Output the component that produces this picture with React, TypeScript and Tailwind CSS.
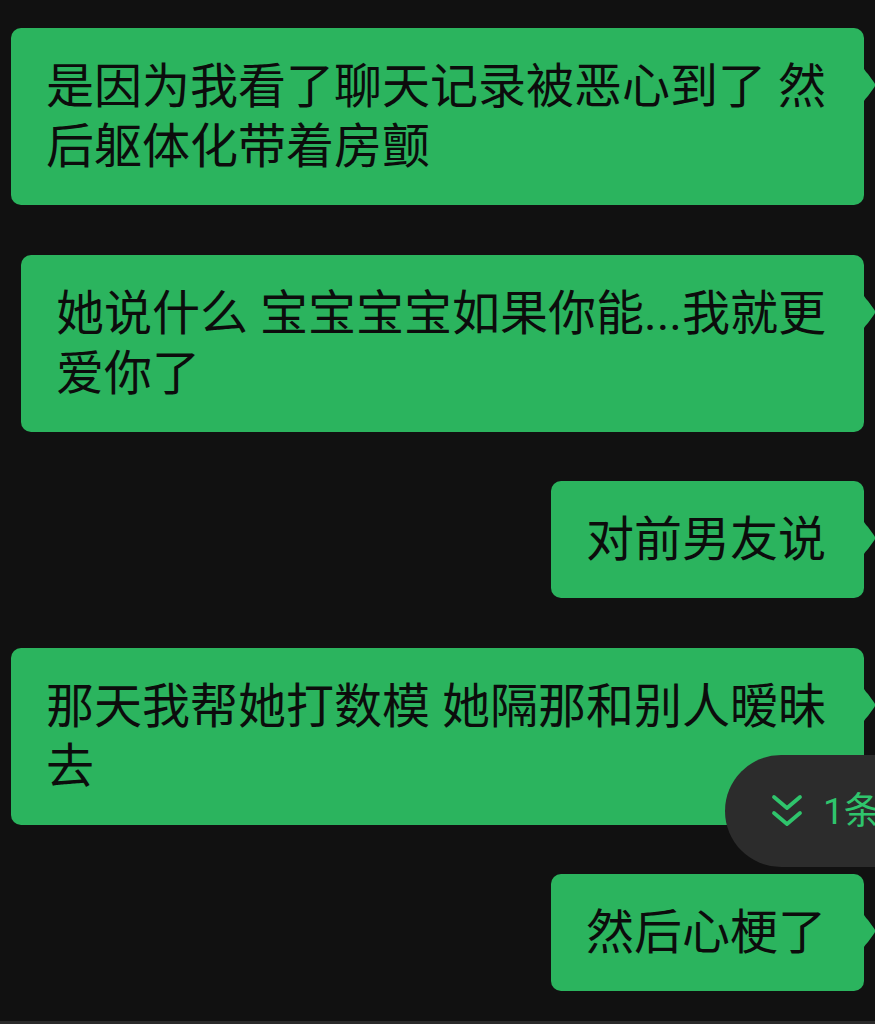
const messages: string[][] = [
  ["是因为我看了聊天记录被恶心到了 然", "后躯体化带着房颤"],
  ["她说什么 宝宝宝宝如果你能...我就更", "爱你了"],
  ["对前男友说"],
  ["那天我帮她打数模 她隔那和别人暧昧", "去"],
  ["然后心梗了"],
];

function Tail() {
  return (
    <svg
      className="absolute left-full top-[41px]"
      width="12"
      height="32"
      viewBox="0 0 12 32"
    >
      <path d="M0 0 Q1.5 2.5 4 5 L10.5 14 Q11.6 16 10.5 18 L4 27 Q1.5 29.5 0 32 Z" fill="#2bb45e" />
    </svg>
  );
}

function Bubble({ lines }: { lines: string[] }) {
  return (
    <div className="relative rounded-[10px] bg-[#2bb45e] pl-[35px] pr-[38px] pt-[29px] pb-[28px] text-[48px] leading-[60px] text-[#0c0c0c] whitespace-nowrap">
      {lines.map((line, i) => (
        <div key={i}>{line}</div>
      ))}
      <Tail />
    </div>
  );
}

export default function App() {
  return (
    <div
      className="relative flex h-[1024px] w-full flex-col overflow-hidden bg-[#111111]"
      style={{ fontFamily: "Roboto, 'Noto Sans CJK SC', sans-serif" }}
    >
      {/* Chat list */}
      <div className="flex flex-1 flex-col items-end gap-[49.5px] pt-[28px] pr-[11px]">
        {messages.map((lines, i) => (
          <Bubble key={i} lines={lines} />
        ))}
      </div>

      {/* Bottom bar edge */}
      <div className="h-[3px] bg-[#2a2a2a]" />

      {/* New messages pill */}
      <div className="absolute left-[725px] top-[755px] flex h-[112px] w-[220px] items-center gap-[20px] rounded-l-[56px] bg-[#2c2c2c] pl-[46px]">
        <svg width="32" height="34" viewBox="0 0 32 34" fill="none" stroke="#2fc46c" strokeWidth="3.8" strokeLinecap="round" strokeLinejoin="round">
          <polyline points="3,3 16,14 29,3" />
          <polyline points="3,19 16,30 29,19" />
        </svg>
        <span className="text-[37px] leading-none text-[#2fc46c] whitespace-nowrap">1条</span>
      </div>
    </div>
  );
}
